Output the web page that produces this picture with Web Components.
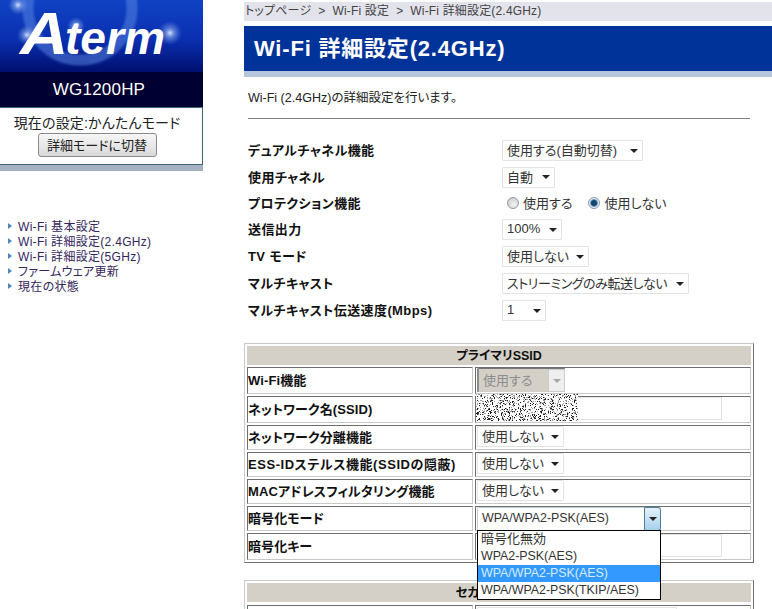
<!DOCTYPE html>
<html lang="ja">
<head>
<meta charset="utf-8">
<title>Aterm WG1200HP</title>
<style>
html, body { margin: 0; height: 609px; overflow: hidden; background: #fff; }
body {
  display: flex;
  align-items: flex-start;
  font-family: "Liberation Sans", "Noto Sans CJK JP", sans-serif;
  font-feature-settings: "palt";
  font-size: 13px;
  color: #222;
}
</style>
</head>
<body>
<aterm-sidebar model="WG1200HP" mode="現在の設定:かんたんモード" action="詳細モードに切替">
  <nav-item>Wi-Fi 基本設定</nav-item>
  <nav-item>Wi-Fi 詳細設定(2.4GHz)</nav-item>
  <nav-item>Wi-Fi 詳細設定(5GHz)</nav-item>
  <nav-item>ファームウェア更新</nav-item>
  <nav-item>現在の状態</nav-item>
</aterm-sidebar>

<page-main crumbs="トップページ &nbsp;&gt;&nbsp; Wi-Fi 設定 &nbsp;&gt;&nbsp; Wi-Fi 詳細設定(2.4GHz)" heading="Wi-Fi 詳細設定(2.4GHz)" intro="Wi-Fi (2.4GHz)の詳細設定を行います。">
  <setting-row label="デュアルチャネル機能" h="27"><drop-select w="141" value="使用する(自動切替)"></drop-select></setting-row>
  <setting-row label="使用チャネル" h="26"><drop-select w="53" value="自動"></drop-select></setting-row>
  <setting-row label="プロテクション機能" h="26"><radio-opt label="使用する"></radio-opt><radio-opt label="使用しない" checked></radio-opt></setting-row>
  <setting-row label="送信出力" h="27"><drop-select w="60" value="100%"></drop-select></setting-row>
  <setting-row label="TV モード" h="27"><drop-select w="87" value="使用しない"></drop-select></setting-row>
  <setting-row label="マルチキャスト" h="27"><drop-select w="187" value="ストリーミングのみ転送しない" style="letter-spacing:-.45px"></drop-select></setting-row>
  <setting-row label="マルチキャスト伝送速度(Mbps)" h="27"><drop-select w="44" value="1"></drop-select></setting-row>

  <ssid-table heading="プライマリSSID">
    <ssid-row label="Wi-Fi機能" h="27"><drop-select w="88" value="使用する" disabled></drop-select></ssid-row>
    <ssid-row label="ネットワーク名(SSID)" h="27"><text-box></text-box><noise-patch></noise-patch></ssid-row>
    <ssid-row label="ネットワーク分離機能" h="25"><drop-select w="87" value="使用しない"></drop-select></ssid-row>
    <ssid-row label="ESS-IDステルス機能(SSIDの隠蔽)" h="25" style="--label-ls:.55px"><drop-select w="87" value="使用しない"></drop-select></ssid-row>
    <ssid-row label="MACアドレスフィルタリング機能" h="25"><drop-select w="87" value="使用しない"></drop-select></ssid-row>
    <ssid-row label="暗号化モード" h="25">
      <drop-select w="184" value="WPA/WPA2-PSK(AES)" open>
        <opt-item style="font-size:13px">暗号化無効</opt-item>
        <opt-item>WPA2-PSK(AES)</opt-item>
        <opt-item selected>WPA/WPA2-PSK(AES)</opt-item>
        <opt-item>WPA/WPA2-PSK(TKIP/AES)</opt-item>
      </drop-select>
    </ssid-row>
    <ssid-row label="暗号化キー" h="27"><text-box></text-box></ssid-row>
  </ssid-table>

  <ssid-table heading="セカンダリSSID" class="second">
    <ssid-row label="" h="27" style="margin-top:1px"><drop-select w="200" value=""></drop-select></ssid-row>
  </ssid-table>
</page-main>

<script>
class AtermSidebar extends HTMLElement {
  constructor() {
    super();
    this.attachShadow({ mode: "open" });
    this.shadowRoot.innerHTML = `<style>
      :host { display: block; width: 203px; flex: none; }
      svg { display: block; }
      .model { height: 35px; background: #000033; color: #fff; font-size: 17px; display: flex; align-items: center; justify-content: center; letter-spacing: .2px; padding-right: 5px; }
      .mode { height: 58px; box-sizing: border-box; border: 1px solid #3f6678; border-left: 0; display: flex; flex-direction: column; align-items: center; padding: 7px 8px 0 0; font-size: 14px; color: #222; }
      .cur { height: 18px; line-height: 17px; white-space: nowrap; letter-spacing: .15px; }
      button { width: 119px; height: 24px; padding: 0 0 2px; font: inherit; font-feature-settings: inherit; font-size: 13px; color: #222; border: 1px solid #8a8a8a; border-radius: 3px; background: linear-gradient(#f7f7f7, #d9d9d9); }
      .shade { height: 6px; background: #a6b1c1; }
      nav { margin-top: 47px; padding-left: 8px; display: flex; flex-direction: column; }
    </style>
    <svg width="203" height="72" viewBox="0 0 203 72">
      <defs>
        <linearGradient id="bg" x1="0" y1="0" x2="0" y2="1">
          <stop offset="0" stop-color="#0f43c4"/><stop offset=".55" stop-color="#0a2fb0"/><stop offset="1" stop-color="#000f70"/>
        </linearGradient>
        <radialGradient id="spot">
          <stop offset="0" stop-color="#dfeaff" stop-opacity=".95"/><stop offset=".35" stop-color="#a9c4f5" stop-opacity=".55"/><stop offset="1" stop-color="#6f96e8" stop-opacity="0"/>
        </radialGradient>
        <filter id="soft"><feGaussianBlur stdDeviation="1.2"/></filter>
      </defs>
      <rect width="203" height="72" fill="url(#bg)"/>
      <circle cx="80" cy="8" r="52" fill="none" stroke="#5d8ae6" stroke-opacity=".5" stroke-width="11" filter="url(#soft)"/>
      <circle cx="18" cy="5" r="10" fill="url(#spot)"/>
      <circle cx="27" cy="35" r="10" fill="url(#spot)"/>
      <circle cx="170" cy="33" r="12" fill="url(#spot)"/>
      <circle cx="76" cy="26" r="9" fill="url(#spot)"/>
      <g fill="#fff" font-family="Liberation Sans" font-style="italic" font-weight="700">
        <text transform="translate(20 54) scale(1.12 1)" font-size="60">A</text>
        <text x="65" y="54" font-size="46" textLength="100" lengthAdjust="spacingAndGlyphs">term</text>
      </g>
    </svg>
    <div class="model"></div>
    <div class="mode"><span class="cur"></span><button type="button"></button></div>
    <div class="shade"></div>
    <nav><slot></slot></nav>`;
  }
  connectedCallback() {
    const root = this.shadowRoot;
    root.querySelector(".model").textContent = this.getAttribute("model");
    root.querySelector(".cur").textContent = this.getAttribute("mode");
    root.querySelector("button").textContent = this.getAttribute("action");
  }
}

class NavItem extends HTMLElement {
  constructor() {
    super();
    this.attachShadow({ mode: "open" });
    this.shadowRoot.innerHTML = `<style>
      :host { display: flex; align-items: center; height: 15px; font-size: 12px; letter-spacing: .3px; color: #33265c; }
      i { width: 0; height: 0; border-left: 4px solid #4d86bd; border-top: 3px solid transparent; border-bottom: 3px solid transparent; margin-right: 6px; }
    </style><i></i><slot></slot>`;
  }
}

class PageMain extends HTMLElement {
  constructor() {
    super();
    this.attachShadow({ mode: "open" });
    this.shadowRoot.innerHTML = `<style>
      :host { display: block; flex: none; width: 528px; margin-left: 41px; padding-top: 2px; }
      .crumbs { height: 19px; line-height: 19px; background: #e3e3ec; font-size: 12px; letter-spacing: .17px; color: #444; padding-left: 1px; margin-bottom: 5px; white-space: nowrap; }
      h1 { margin: 0; height: 45px; line-height: 45px; box-sizing: content-box; border-bottom: 6px solid #b5c6dc; background: #003399; color: #fff; font-size: 22px; letter-spacing: .8px; font-weight: 700; padding-left: 10px; white-space: nowrap; }
      p { margin: 0; height: 41px; line-height: 43px; padding-left: 4px; font-size: 12.5px; }
      hr { margin: 0 22px 18px 4px; border: 0; height: 1px; background: #808080; }
    </style>
    <div class="crumbs"></div><h1></h1><p></p><hr>
    <slot></slot>`;
  }
  connectedCallback() {
    const root = this.shadowRoot;
    root.querySelector(".crumbs").textContent = this.getAttribute("crumbs");
    root.querySelector("h1").textContent = this.getAttribute("heading");
    root.querySelector("p").textContent = this.getAttribute("intro");
  }
}

class SettingRow extends HTMLElement {
  constructor() {
    super();
    this.attachShadow({ mode: "open" });
    this.shadowRoot.innerHTML = `<style>
      :host { display: flex; align-items: center; padding-left: 4px; }
      b { width: 254px; flex: none; font-size: 13px; letter-spacing: .4px; color: #111; padding-bottom: 2px; }
      div { display: flex; align-items: center; }
    </style><b></b><div><slot></slot></div>`;
  }
  connectedCallback() {
    this.shadowRoot.querySelector("b").textContent = this.getAttribute("label");
    this.style.height = this.getAttribute("h") + "px";
  }
}

class DropSelect extends HTMLElement {
  constructor() {
    super();
    this.attachShadow({ mode: "open" });
    this.shadowRoot.innerHTML = `<style>
      :host { display: inline-flex; position: relative; box-sizing: border-box; height: 21px; align-items: center; border: 1px solid #e3e3e3; border-radius: 1px; background: #fff; font-size: 13px; color: #333; white-space: nowrap; }
      .val { flex: 1; padding: 0 0 2px 4px; }
      .btn { flex: none; width: 17px; align-self: stretch; display: flex; align-items: center; justify-content: center; box-sizing: border-box; }
      .btn::after { content: ""; border-top: 4px solid #222; border-left: 4px solid transparent; border-right: 4px solid transparent; }
      :host([disabled]) { height: 24px; align-self: flex-start; border-color: #777 #eee #eee #8c8c8c; background: #d4d0c8; color: #8d8d8d; border-width: 1px 0 0 2px; }
      :host([disabled]) .btn { background: #eeeeee; border: 1px solid #ccc; }
      :host([disabled]) .btn::after { border-top-color: #a8a8a8; }
      :host([open]) { height: 24px; align-self: flex-start; border-color: #c9d3da; font-size: 12.4px; }
      :host([open]) .btn { border: 1px solid #4f7d9c; border-radius: 0 3px 3px 0; background: linear-gradient(#e4f1fa, #a7d0ec); margin: -1px -1px -1px 0; }
      .menu { display: none; position: absolute; z-index: 5; left: -1px; top: 22px; width: 184px; box-sizing: border-box; border: 1px solid #000; background: #fff; }
      :host([open]) .menu { display: block; }
    </style><span class="val"></span><span class="btn"></span><div class="menu"><slot></slot></div>`;
  }
  connectedCallback() {
    this.shadowRoot.querySelector(".val").textContent = this.getAttribute("value");
    this.style.width = this.getAttribute("w") + "px";
  }
}

class OptItem extends HTMLElement {
  constructor() {
    super();
    this.attachShadow({ mode: "open" });
    this.shadowRoot.innerHTML = `<style>
      :host { display: block; height: 17px; line-height: 16px; padding-left: 3px; font-size: 12.4px; color: #333; }
      :host([selected]) { background: #3399ff; color: #d5ecff; }
    </style><slot></slot>`;
  }
}

class RadioOpt extends HTMLElement {
  constructor() {
    super();
    this.attachShadow({ mode: "open" });
    this.shadowRoot.innerHTML = `<style>
      :host { display: inline-flex; align-items: center; margin-left: 5px; margin-right: 12px; gap: 4px; font-size: 13px; color: #333; }
      i { width: 12px; height: 12px; box-sizing: border-box; border-radius: 50%; border: 1px solid #8f9aa5; background: radial-gradient(circle at 60% 65%, #f4f4f4, #c4c4c4); }
      :host([checked]) { margin-left: 4px; }
      :host([checked]) i { background: radial-gradient(circle, #12486f 0 2.5px, #6d9cc0 3.5px, #e8eef3 4.5px); }
      span { padding-bottom: 1px; }
    </style><i></i><span></span>`;
  }
  connectedCallback() {
    this.shadowRoot.querySelector("span").textContent = this.getAttribute("label");
  }
}

class SsidTable extends HTMLElement {
  constructor() {
    super();
    this.attachShadow({ mode: "open" });
    this.shadowRoot.innerHTML = `<style>
      :host { display: flex; flex-direction: column; width: 510px; box-sizing: border-box; padding: 2px; gap: 2px; border: 1px solid; border-color: #c8c8c8 #6e6e6e #6e6e6e #c8c8c8; margin-top: 19px; }
      :host(.second) { margin-top: 17px; }
      div { height: 19px; line-height: 21px; text-align: center; background: #d4d0c8; font-size: 12.5px; font-weight: 700; color: #111; }
    </style><div></div><slot></slot>`;
  }
  connectedCallback() {
    this.shadowRoot.querySelector("div").textContent = this.getAttribute("heading");
  }
}

class SsidRow extends HTMLElement {
  constructor() {
    super();
    this.attachShadow({ mode: "open" });
    this.shadowRoot.innerHTML = `<style>
      :host { display: grid; grid-template-columns: 226px 276px; grid-template-rows: minmax(0, 1fr); gap: 2px; }
      .c { box-sizing: border-box; min-height: 0; border: 1px solid; border-color: #6e6e6e #c8c8c8 #c8c8c8 #6e6e6e; display: flex; align-items: center; position: relative; padding-bottom: 2px; }
      b { font-size: 13px; letter-spacing: var(--label-ls, .1px); color: #111; white-space: nowrap; }
      .v { padding-left: 1px; }
    </style><div class="c"><b></b></div><div class="c v"><slot></slot></div>`;
  }
  connectedCallback() {
    this.shadowRoot.querySelector("b").textContent = this.getAttribute("label");
    this.style.height = this.getAttribute("h") + "px";
  }
}

class TextBox extends HTMLElement {
  constructor() {
    super();
    this.attachShadow({ mode: "open" });
    this.shadowRoot.innerHTML = `<style>
      :host { display: block; width: 245px; height: 23px; box-sizing: border-box; border: 1px solid #dfe3e6; background: #fff; }
    </style>`;
  }
}

// mosaic over the SSID value, same as the masked area of the capture
class NoisePatch extends HTMLElement {
  constructor() {
    super();
    this.attachShadow({ mode: "open" });
    let seed = 20151;
    const rnd = () => (seed = (seed * 16807) % 2147483647) / 2147483647;
    let dark = "", mid = "";
    for (let y = 0; y < 27; y++) {
      for (let x = 0; x < 102; x++) {
        const r = rnd();
        if (r < 0.14) dark += `M${x} ${y}h1v1h-1z`;
        else if (r < 0.3) mid += `M${x} ${y}h1v1h-1z`;
      }
    }
    this.shadowRoot.innerHTML = `<style>
      :host { position: absolute; left: 0; top: -3px; width: 102px; height: 27px; background: #fff; }
      svg { display: block; }
    </style><svg width="102" height="27"><path d="${mid}" fill="#9a9a9a"/><path d="${dark}" fill="#222"/></svg>`;
  }
}

customElements.define("aterm-sidebar", AtermSidebar);
customElements.define("nav-item", NavItem);
customElements.define("page-main", PageMain);
customElements.define("setting-row", SettingRow);
customElements.define("drop-select", DropSelect);
customElements.define("opt-item", OptItem);
customElements.define("radio-opt", RadioOpt);
customElements.define("ssid-table", SsidTable);
customElements.define("ssid-row", SsidRow);
customElements.define("text-box", TextBox);
customElements.define("noise-patch", NoisePatch);
</script>
</body>
</html>
